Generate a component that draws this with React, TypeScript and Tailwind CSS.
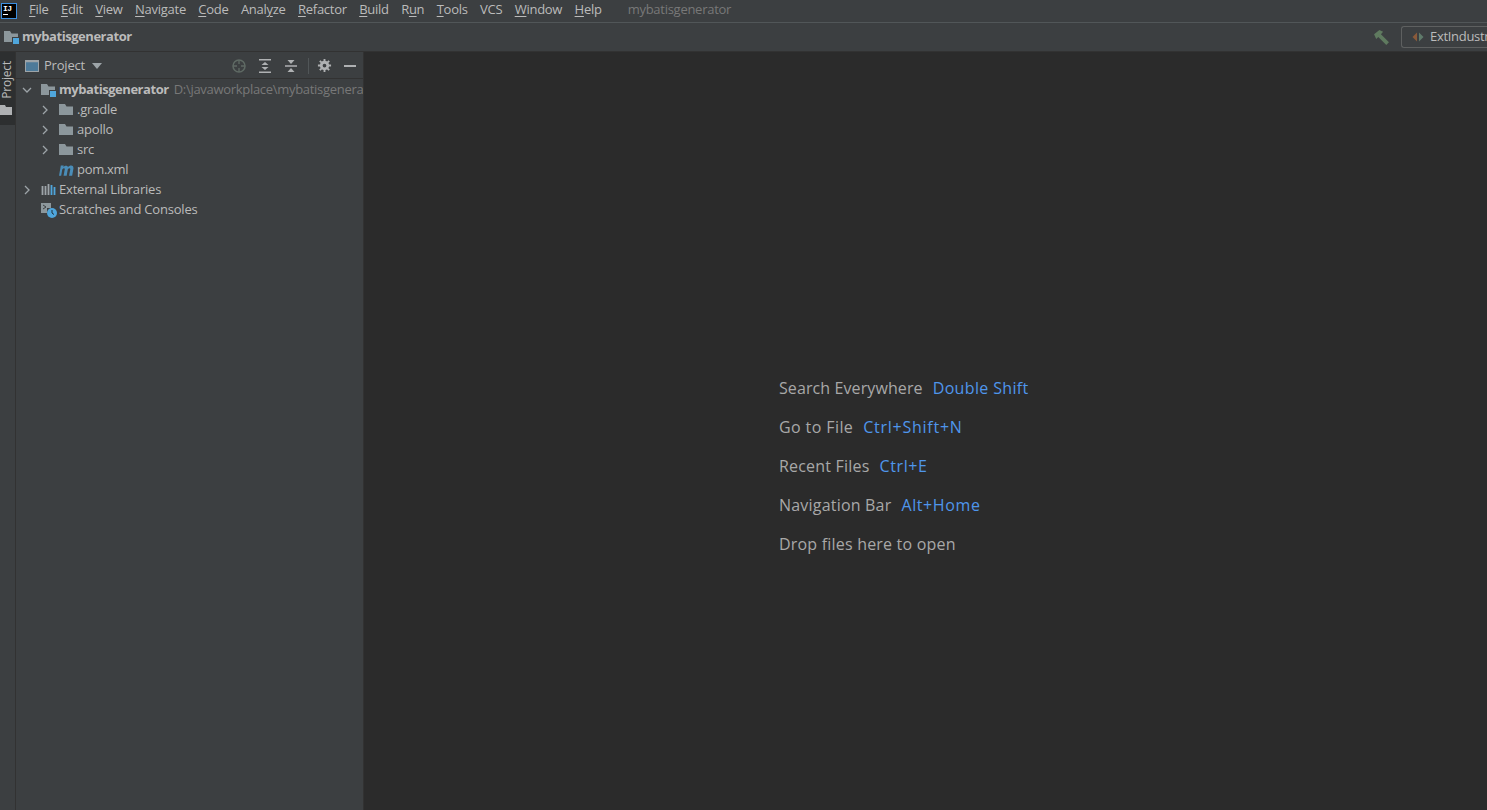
import { ReactNode } from "react";

const FONT = "font-['Open_Sans','Noto_Sans',sans-serif]";

const menu: [string, string, string][] = [
  ["", "F", "ile"],
  ["", "E", "dit"],
  ["", "V", "iew"],
  ["", "N", "avigate"],
  ["", "C", "ode"],
  ["Anal", "y", "ze"],
  ["", "R", "efactor"],
  ["", "B", "uild"],
  ["R", "u", "n"],
  ["", "T", "ools"],
  ["VCS", "", ""],
  ["", "W", "indow"],
  ["", "H", "elp"],
];

const hints: [string, string, string, string][] = [
  ["Search Everywhere", "Double Shift", "tracking-[0.1px]", "tracking-[0.35px]"],
  ["Go to File", "Ctrl+Shift+N", "tracking-[0.4px]", "tracking-[0.75px]"],
  ["Recent Files", "Ctrl+E", "tracking-[0.2px]", "tracking-[0.6px]"],
  ["Navigation Bar", "Alt+Home", "tracking-[0.2px]", "tracking-[0.6px]"],
  ["Drop files here to open", "", "tracking-[0.2px]", ""],
];

function Folder({ module }: { module?: boolean }) {
  return (
    <svg width="16" height="16" viewBox="0 0 16 16" className="shrink-0">
      <path d="M0 2h6l1.500 2.500H14V13H0z" fill="#8c979c" />
      {module && <rect x="8.500" y="8.500" width="7" height="7" fill="#4fa6dc" stroke="#3c3f41" strokeWidth="1" />}
    </svg>
  );
}

function Chevron({ open }: { open?: boolean }) {
  return (
    <svg width="10" height="10" viewBox="0 0 10 10" className="shrink-0">
      <path d={open ? "M1 3l4 4 4-4" : "M3 1l4 4-4 4"} fill="none" stroke="#9da4a8" strokeWidth="1.3" />
    </svg>
  );
}

function Row({ indent, children }: { indent: string; children: ReactNode }) {
  return <div className={`flex h-5 items-center ${indent}`}>{children}</div>;
}

export default function App() {
  return (
    <div className={`flex h-[810px] w-[1487px] flex-col overflow-hidden bg-[#3c3f41] text-[13px] text-[#bbbbbb] ${FONT}`}>
      {/* menu bar */}
      <div className="flex h-[23px] shrink-0 items-center border-b border-[#515658]">
        <div className="ml-[1px] flex h-4 w-4 shrink-0 flex-col items-start border border-[#3d8fe0] bg-black pl-[1px] text-white">
          <span className="whitespace-nowrap font-['Liberation_Mono',monospace] text-[8px] font-bold leading-[9px] tracking-[-0.6px]">IJ</span>
          <span className="mt-[1px] h-[1px] w-[5px] bg-white" />
        </div>
        <div className="mb-[2px] ml-[12px] flex gap-[12.4px] tracking-[-0.27px]">
          {menu.map(([a, u, b]) => (
            <span key={a + u + b}>
              {a}
              <span className="underline underline-offset-2">{u}</span>
              {b}
            </span>
          ))}
        </div>
        <span className="mb-[2px] ml-[26px] tracking-[-0.27px] text-[#787878]">mybatisgenerator</span>
      </div>

      {/* navigation bar */}
      <div className="flex h-[29px] shrink-0 items-center border-b border-[#323232] pl-[4px]">
        <Folder module />
        <span className="ml-[2px] font-bold tracking-[-0.45px]">mybatisgenerator</span>
        <div className="ml-auto flex items-center">
          <svg width="17" height="17" viewBox="0 0 16 16" className="mr-[11px] shrink-0">
            <path d="M1 5l5-4 3.500 1.500L7.500 5l7.500 7.500-2.500 2.500L5 7.500 3 9.500z" fill="#5f7a5f" />
          </svg>
          <div className="flex h-[22px] w-[86px] items-center overflow-hidden rounded-l-[3px] border border-r-0 border-[#5e6060] pl-[10px]">
            <svg width="12" height="12" viewBox="0 0 12 12" className="shrink-0">
              <path d="M5 1.500v9L0.500 6z" fill="#8a5a3a" />
              <path d="M7 1.500v9L11.500 6z" fill="#5f7a6a" />
            </svg>
            <span className="ml-[6px] whitespace-nowrap tracking-[-0.3px]">ExtIndustry</span>
          </div>
        </div>
      </div>

      <div className="flex min-h-0 flex-1">
        {/* tool window stripe */}
        <div className="w-[16px] shrink-0 border-r border-[#323232]">
          <div className="flex h-[73px] w-[15px] flex-col items-start bg-[#2d2f30] pt-[9px]">
            <span className="rotate-180 text-[12px] leading-[13px] tracking-[-0.2px] [writing-mode:vertical-rl]">Project</span>
            <svg width="12" height="10" viewBox="0 0 12 10" className="mt-[6px] shrink-0">
              <path d="M0 0h5l1 2h6v8H0z" fill="#afb1b3" />
            </svg>
          </div>
        </div>

        {/* project panel */}
        <div className="w-[348px] shrink-0 overflow-hidden border-r border-[#323232]">
          <div className="flex h-[27px] items-center border-b border-[#323232] pl-[9px] pt-[1px]">
            <svg width="14" height="14" viewBox="0 0 14 14" className="shrink-0">
              <rect x="0.500" y="1.500" width="13" height="11" fill="#4d7a99" stroke="#9da4a8" />
              <path d="M0.500 2.500h13" stroke="#9da4a8" strokeWidth="1.5" />
            </svg>
            <span className="ml-[5px] tracking-[-0.2px]">Project</span>
            <svg width="10" height="6" viewBox="0 0 10 6" className="ml-[7px] shrink-0">
              <path d="M0 0h10L5 6z" fill="#9da4a8" />
            </svg>
            <div className="ml-[129px] flex items-center">
              <svg width="16" height="16" viewBox="0 0 16 16" className="shrink-0">
                <circle cx="8" cy="8" r="6" fill="none" stroke="#5f6a64" strokeWidth="1.5" />
                <path d="M8 2v4M8 10v4M2 8h4M10 8h4" stroke="#5f6a64" strokeWidth="1.3" />
              </svg>
              <svg width="16" height="16" viewBox="0 0 16 16" className="ml-[10px] shrink-0">
                <path d="M2 1h12v1.500H2zM2 13.500h12V15H2z" fill="#afb1b3" />
                <path d="M8 4l3.500 3h-7zM8 12L4.500 9h7z" fill="#afb1b3" />
              </svg>
              <svg width="16" height="16" viewBox="0 0 16 16" className="ml-[10px] shrink-0">
                <path d="M2 7.250h12v1.500H2z" fill="#afb1b3" />
                <path d="M8 6L4.500 2h7zM8 10l3.500 4h-7z" fill="#afb1b3" />
              </svg>
              <span className="ml-[9px] h-4 w-px bg-[#515658]" />
              <svg width="15" height="15" viewBox="0 0 16 16" className="ml-[8px] shrink-0">
                <circle cx="8" cy="8" r="3.500" fill="none" stroke="#afb1b3" strokeWidth="3" />
                <path d="M8 1v3M8 12v3M1 8h3M12 8h3M3 3l2 2M11 11l2 2M13 3l-2 2M5 11l-2 2" stroke="#afb1b3" strokeWidth="2" />
              </svg>
              <span className="ml-[12px] h-[2px] w-3 bg-[#afb1b3]" />
            </div>
          </div>

          <div className="pt-[1px] tracking-[-0.2px]">
            <Row indent="pl-[6px]">
              <Chevron open />
              <span className="ml-[9px]"><Folder module /></span>
              <span className="ml-[2px] font-bold tracking-[-0.45px]">mybatisgenerator</span>
              <span className="ml-[5px] whitespace-nowrap tracking-[-0.3px] text-[#787878]">D:\javaworkplace\mybatisgenerator</span>
            </Row>
            {[".gradle", "apollo", "src"].map((name) => (
              <Row key={name} indent="pl-[24px]">
                <Chevron />
                <span className="ml-[9px]"><Folder /></span>
                <span className="ml-[2px]">{name}</span>
              </Row>
            ))}
            <Row indent="pl-[43px]">
              <svg width="15" height="11" viewBox="1 3 12.500 9.200" className="shrink-0">
                <path d="M2.500 12L4 3.500h2.400l-.2 1.200C7.400 3.200 9.400 3.100 10 4.700c1.300-1.500 4.600-2.100 4.600 1L13.500 12h-2.600l1-5.500c.2-1-1.400-.9-2.100.2L8.900 12H6.300l1-5.500c.2-1-1.400-.9-2.100.2L4.300 12z" fill="#4a8db8" transform="translate(-1.500 0)" />
              </svg>
              <span className="ml-[3px] tracking-[-0.3px]">pom.xml</span>
            </Row>
            <Row indent="pl-[6px]">
              <Chevron />
              <svg width="16" height="16" viewBox="0 0 16 16" className="ml-[9px] shrink-0">
                <path d="M1.500 4v9M4.500 4v9M7.500 2v11" stroke="#9da4a8" strokeWidth="1.8" />
                <path d="M10.500 3v10M13.500 5v8" stroke="#4fa6dc" strokeWidth="1.8" />
              </svg>
              <span className="ml-[2px]">External Libraries</span>
            </Row>
            <Row indent="pl-[25px]">
              <svg width="16" height="16" viewBox="0 0 16 16" className="shrink-0">
                <path d="M0 1h10v5H6v5H0z" fill="#8c979c" />
                <path d="M2 3l3 2-3 2" fill="none" stroke="#3c3f41" strokeWidth="1" />
                <circle cx="11" cy="11" r="5" fill="#4fa6dc" />
                <path d="M11 8v3l2 1.500" fill="none" stroke="#1f2f3a" strokeWidth="1" />
              </svg>
              <span className="ml-[2px]">Scratches and Consoles</span>
            </Row>
          </div>
        </div>

        {/* empty editor */}
        <div className="flex min-w-0 flex-1 bg-[#2b2b2b] pl-[415px] pt-[326px]">
          <div className="flex flex-col gap-[18px] text-[16px] leading-[21px] text-[#a8a8a8]">
            {hints.map(([label, key, labelTrack, keyTrack]) => (
              <div key={label} className="flex gap-[10px] whitespace-nowrap">
                <span className={labelTrack}>{label}</span>
                {key && <span className={`text-[#4f96ec] ${keyTrack}`}>{key}</span>}
              </div>
            ))}
          </div>
        </div>
      </div>
    </div>
  );
}
